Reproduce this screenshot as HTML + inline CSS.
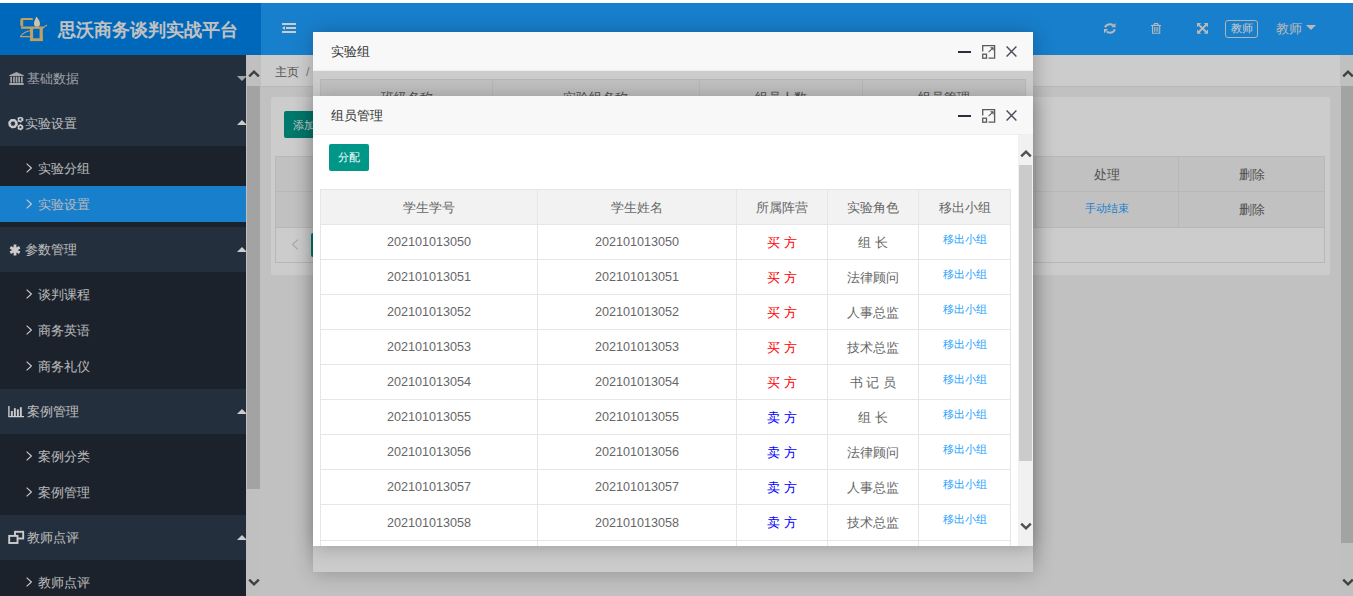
<!DOCTYPE html>
<html><head><meta charset="utf-8">
<style>
*{box-sizing:border-box;margin:0;padding:0}
html,body{width:1353px;height:596px;overflow:hidden;background:#fff;font-family:"Liberation Sans",sans-serif;font-size:12.6px;color:#666}
.a{position:absolute}
#hdr{left:0;top:3px;width:1353px;height:52px;background:#1E9FFF}
#logo{left:0;top:3px;width:261px;height:52px;background:#0083ea}
#title{left:58px;top:20px;font-size:18px;font-weight:bold;color:#f2f2f2;line-height:20px;white-space:nowrap}
#side{left:0;top:55px;width:246px;height:541px;background:#2e3b4e;overflow:hidden}
.grp{position:absolute;left:0;width:246px;height:45px;background:#2e3b4e}
.sub{position:absolute;left:0;width:246px;background:#222b38}
.gt{position:absolute;top:1px;line-height:45px;color:#ececec;white-space:nowrap}
.st{position:absolute;left:38px;line-height:36px;color:#e6e6e6;white-space:nowrap}
.arr{position:absolute;left:26px;width:6px;height:10px}
.caret{position:absolute;left:237px;width:0;height:0;border-left:5px solid transparent;border-right:5px solid transparent}
.up{border-bottom:5px solid #fff}
.dn{border-top:5px solid #fff}
.btn{position:absolute;background:#009688;color:#fff;border-radius:2px;font-size:10.8px;white-space:nowrap;overflow:hidden}
table{border-collapse:collapse;table-layout:fixed}
td{border:1px solid #e6e6e6;text-align:center;padding:0;overflow:hidden;white-space:nowrap}
td.c{padding-top:2px}
.layer{position:absolute;background:#fff;border-radius:2px;box-shadow:1px 1px 20px rgba(0,0,0,.25)}
.ltitle{position:absolute;left:0;top:0;width:720px;height:39px;background:#F8F8F8;border-bottom:1px solid #eee;color:#333;line-height:38px;padding-left:18px;padding-top:1px}
.ico{position:absolute}
.lk{color:#1E9FFF;font-size:10.8px;position:relative;top:-4px}
</style></head><body>
<div class="a" style="left:0;top:0;width:1353px;height:596px">
<div class="a" id="hdr"></div>
<div class="a" id="logo"></div>
<svg class="a" style="left:0;top:0" width="60" height="55" viewBox="0 0 60 55">
 <g fill="#f0c97e">
  <path d="M22.5 18 H32.8 V20 H23.2 V26.6 H22 Q20.3 26.6 20.3 25 V20 Q20.3 18 22.5 18 Z"/>
  <rect x="21" y="26.5" width="22.4" height="2.3"/>
  <rect x="30" y="27.5" width="3.1" height="13.5"/>
  <rect x="39.6" y="27.5" width="3.2" height="13.5"/>
  <rect x="30" y="38.3" width="12.8" height="2.8"/>
 </g>
 <path d="M42.5 28 L47 25" stroke="#f0c97e" stroke-width="1.1"/>
 <path d="M20 36.6 H30.5 M20.6 36.2 Q24 31.5 30.5 30.8" fill="none" stroke="#f0c97e" stroke-width="1.1"/>
 <path d="M36.4 16.4 Q34 21 34 23.6 Q34 26.8 37 26.8 Q40 26.8 40 23.6 Q40 21 36.4 16.4 Z" fill="#fff4d2"/>
</svg>
<div class="a" id="title">思沃商务谈判实战平台</div>
<svg class="a" style="left:282px;top:23px" width="14" height="10" viewBox="0 0 14 10">
  <rect x="0" y="0" width="14" height="2" fill="#fff"/>
  <rect x="4" y="4" width="10" height="2" fill="#fff"/>
  <rect x="0" y="8" width="14" height="2" fill="#fff"/>
  <path d="M0 5 L3 3 V7 Z" fill="#fff"/>
</svg>
<svg class="a" style="left:1100px;top:19px" width="20" height="20" viewBox="0 0 20 20">
  <path d="M5 8.2 Q6.5 5.2 10 5.2 Q12 5.2 13.2 6.4" fill="none" stroke="#e8e8e8" stroke-width="2"/>
  <path d="M15.5 4 V8.2 H11.3 Z" fill="#e8e8e8"/>
  <path d="M15 10.3 Q13.5 13.7 10 13.7 Q8 13.7 6.8 12.5" fill="none" stroke="#e8e8e8" stroke-width="2"/>
  <path d="M4 10 H8.2 L4 14.2 Z" fill="#e8e8e8"/>
</svg>
<svg class="a" style="left:1146px;top:19px" width="20" height="20" viewBox="0 0 20 20">
  <path d="M5 6.5 H15" stroke="#e8e8e8" stroke-width="1.1"/>
  <path d="M7.6 6.3 L8.6 4.6 H11.6 L12.6 6.3" fill="none" stroke="#e8e8e8" stroke-width="1.1"/>
  <path d="M6.5 6.5 V14.3 H13.7 V6.5" fill="none" stroke="#e8e8e8" stroke-width="1.1"/>
  <path d="M8.4 8 V12.8 M10.1 8 V12.8 M11.8 8 V12.8" stroke="#e8e8e8" stroke-width="0.9"/>
</svg>
<svg class="a" style="left:1192px;top:19px" width="20" height="20" viewBox="0 0 20 20">
  <path d="M5 4 H9.2 L5 8.2 Z M16 4 V8.2 L11.8 4 Z M5 14.8 V10.6 L9.2 14.8 Z M16 14.8 H11.8 L16 10.6 Z" fill="#e8e8e8"/>
  <path d="M6.5 5.5 L14.5 13.3 M14.5 5.5 L6.5 13.3" stroke="#e8e8e8" stroke-width="1.9"/>
</svg>
<div class="a" style="left:1225px;top:20px;width:33px;height:18px;border:1px solid #e0e0e0;border-radius:3px;color:#fff;font-size:11px;line-height:14px;text-align:center;padding-top:0">教师</div>
<div class="a" style="left:1276px;top:20px;font-size:12.6px;line-height:18px;color:#e8e8e8">教师</div>
<div class="a" style="left:1306px;top:25px;width:0;height:0;border-left:5px solid transparent;border-right:5px solid transparent;border-top:5px solid #e8e8e8"></div>
<div class="a" id="side">

  <div class="grp" style="top:0">
    <svg class="a" style="left:9px;top:17px" width="15" height="13" viewBox="0 0 15 13">
      <path d="M7.5 0 L14.8 3.2 V4 H0.2 V3.2 Z" fill="#fff" fill-opacity=".75"/>
      <g fill="#fff" fill-opacity=".75"><rect x="1.3" y="4.6" width="1.7" height="6"/><rect x="4.1" y="4.6" width="1.7" height="6"/>
      <rect x="6.7" y="4.6" width="1.7" height="6"/><rect x="9.3" y="4.6" width="1.7" height="6"/><rect x="12" y="4.6" width="1.7" height="6"/>
      <rect x="0.3" y="11" width="14.4" height="2"/></g>
    </svg>
    <div class="gt" style="left:27px;top:2px;color:rgba(255,255,255,.75)">基础数据</div>
    <div class="caret dn" style="top:21px;border-top-color:rgba(255,255,255,.75)"></div>
  </div>
  <div class="grp" style="top:45px;height:46px">
    <svg class="a" style="left:8px;top:17px" width="16" height="14" viewBox="0 0 16 14">
      <circle cx="5" cy="6.6" r="3.3" fill="none" stroke="#fff" stroke-width="2.8" stroke-dasharray="1.5 1.1"/>
      <circle cx="5" cy="6.6" r="3.6" fill="none" stroke="#fff" stroke-width="2"/>
      <circle cx="12.4" cy="2.5" r="2" fill="none" stroke="#fff" stroke-width="2.2" stroke-dasharray="1.1 0.9"/>
      <circle cx="12.4" cy="2.5" r="2" fill="none" stroke="#fff" stroke-width="1.2"/>
      <circle cx="12.4" cy="10.2" r="2" fill="none" stroke="#fff" stroke-width="2.2" stroke-dasharray="1.1 0.9"/>
      <circle cx="12.4" cy="10.2" r="2" fill="none" stroke="#fff" stroke-width="1.2"/>
    </svg>
    <div class="gt" style="left:25px;line-height:46px">实验设置</div>
    <div class="caret up" style="top:20px"></div>
  </div>

<div class="sub" style="top:91px;height:81px"><svg class="arr" style="top:17px" viewBox="0 0 6 10"><path d="M0.6 0.6 L5.4 5 L0.6 9.4" fill="none" stroke="#fff" stroke-width="1.1"/></svg><div class="st" style="top:5px">实验分组</div><div class="a" style="left:0;top:40px;width:246px;height:36px;background:#1E9FFF"></div><svg class="arr" style="top:53px" viewBox="0 0 6 10"><path d="M0.6 0.6 L5.4 5 L0.6 9.4" fill="none" stroke="#fff" stroke-width="1.1"/></svg><div class="st" style="top:41px">实验设置</div></div>
  <div class="grp" style="top:172px">
    <svg class="a" style="left:9px;top:17px" width="12" height="12" viewBox="0 0 12 12">
      <path d="M6 0.6 V11.4 M1.3 3.3 L10.7 8.7 M10.7 3.3 L1.3 8.7" stroke="#fff" stroke-width="2.8"/>
    </svg>
    <div class="gt" style="left:25px">参数管理</div>
    <div class="caret up" style="top:20px"></div>
  </div>

<div class="sub" style="top:217px;height:117px"><svg class="arr" style="top:17px" viewBox="0 0 6 10"><path d="M0.6 0.6 L5.4 5 L0.6 9.4" fill="none" stroke="#fff" stroke-width="1.1"/></svg><div class="st" style="top:5px">谈判课程</div><svg class="arr" style="top:53px" viewBox="0 0 6 10"><path d="M0.6 0.6 L5.4 5 L0.6 9.4" fill="none" stroke="#fff" stroke-width="1.1"/></svg><div class="st" style="top:41px">商务英语</div><svg class="arr" style="top:89px" viewBox="0 0 6 10"><path d="M0.6 0.6 L5.4 5 L0.6 9.4" fill="none" stroke="#fff" stroke-width="1.1"/></svg><div class="st" style="top:77px">商务礼仪</div></div>
  <div class="grp" style="top:334px">
    <svg class="a" style="left:8px;top:17px" width="17" height="12" viewBox="0 0 17 12">
      <path d="M0.9 0 V10.6 H16" fill="none" stroke="#fff" stroke-width="1.4"/>
      <rect x="2.9" y="5" width="1.9" height="5" fill="#fff"/><rect x="5.9" y="2.2" width="1.9" height="7.8" fill="#fff"/>
      <rect x="8.9" y="3.4" width="1.9" height="6.6" fill="#fff"/><rect x="11.9" y="1.2" width="1.9" height="8.8" fill="#fff"/>
    </svg>
    <div class="gt" style="left:27px">案例管理</div>
    <div class="caret up" style="top:20px"></div>
  </div>

<div class="sub" style="top:379px;height:81px"><svg class="arr" style="top:17px" viewBox="0 0 6 10"><path d="M0.6 0.6 L5.4 5 L0.6 9.4" fill="none" stroke="#fff" stroke-width="1.1"/></svg><div class="st" style="top:5px">案例分类</div><svg class="arr" style="top:53px" viewBox="0 0 6 10"><path d="M0.6 0.6 L5.4 5 L0.6 9.4" fill="none" stroke="#fff" stroke-width="1.1"/></svg><div class="st" style="top:41px">案例管理</div></div>
  <div class="grp" style="top:460px">
    <svg class="a" style="left:8px;top:15px" width="17" height="15" viewBox="0 0 17 15">
      <rect x="7" y="1.8" width="8.2" height="6.7" fill="none" stroke="#fff" stroke-width="1.9"/>
      <rect x="1.2" y="5.9" width="8.3" height="7.1" fill="#2e3b4e" stroke="#fff" stroke-width="1.9"/>
    </svg>
    <div class="gt" style="left:27px">教师点评</div>
    <div class="caret up" style="top:20px"></div>
  </div>

<div class="sub" style="top:505px;height:81px"><svg class="arr" style="top:17px" viewBox="0 0 6 10"><path d="M0.6 0.6 L5.4 5 L0.6 9.4" fill="none" stroke="#fff" stroke-width="1.1"/></svg><div class="st" style="top:5px">教师点评</div><svg class="arr" style="top:53px" viewBox="0 0 6 10"><path d="M0.6 0.6 L5.4 5 L0.6 9.4" fill="none" stroke="#fff" stroke-width="1.1"/></svg><div class="st" style="top:41px">教师点评</div></div>
</div>
<div class="a" style="left:246px;top:55px;width:15px;height:541px;background:#f1f1f1"></div>
<div class="a" style="left:247px;top:86px;width:13px;height:403px;background:#cccccc"></div>
<svg class="a" style="left:247.5px;top:69px" width="12" height="9" viewBox="0 0 12 9"><path d="M1.2 7.4 L6 2.6 L10.8 7.4" fill="none" stroke="#505050" stroke-width="2.4"/></svg>
<svg class="a" style="left:247.5px;top:578px" width="12" height="9" viewBox="0 0 12 9"><path d="M1.2 1.6 L6 6.4 L10.8 1.6" fill="none" stroke="#505050" stroke-width="2.4"/></svg>
<div class="a" style="left:261px;top:55px;width:1079px;height:541px;background:#f2f2f2"></div>
<div class="a" style="left:261px;top:55px;width:1079px;height:32px;background:#fff;border-bottom:1px solid #e6e6e6"></div>
<div class="a" style="left:275px;top:62px;line-height:18px;color:#666;padding-top:1px;font-size:12px">主页<span style="margin-left:7px;color:#999;font-size:12.6px">/</span></div>
<div class="a" style="left:271px;top:97px;width:1059px;height:178px;background:#fff;border-radius:2px"></div>
<div class="btn" style="left:284px;top:111px;width:70px;height:27px;line-height:27px;padding-left:9px;padding-top:1px">添加实验组</div>
<table class="a" style="left:275px;top:156px;width:1050px">
  <tr style="height:35px;background:#f2f2f2"><td style="width:760px"></td><td class="c" style="width:143px">处理</td><td class="c" style="width:146px">删除</td></tr>
  <tr style="height:36px;background:#f2f2f2"><td></td><td><span style="color:#1E9FFF;font-size:10.8px;position:relative;top:-1px">手动结束</span></td><td class="c">删除</td></tr>
</table>
<div class="a" style="left:275px;top:227px;width:1050px;height:36px;border:1px solid #e6e6e6;border-top:0"></div>
<svg class="a" style="left:291px;top:239px" width="8" height="11" viewBox="0 0 8 11"><path d="M6.8 0.6 L1.5 5.5 L6.8 10.4" fill="none" stroke="#d2d2d2" stroke-width="1.2"/></svg>
<div class="a" style="left:311px;top:233px;width:30px;height:24px;background:#009688;border-radius:2px"></div>
<div class="a" style="left:1340px;top:55px;width:13px;height:541px;background:#f1f1f1"></div>
<div class="a" style="left:1341px;top:86px;width:12px;height:457px;background:#cccccc"></div>
<svg class="a" style="left:1342px;top:69px" width="12" height="9" viewBox="0 0 12 9"><path d="M1.2 7.4 L6 2.6 L10.8 7.4" fill="none" stroke="#505050" stroke-width="2.4"/></svg>
<svg class="a" style="left:1342px;top:578px" width="12" height="9" viewBox="0 0 12 9"><path d="M1.2 1.6 L6 6.4 L10.8 1.6" fill="none" stroke="#505050" stroke-width="2.4"/></svg>
</div>
<div class="a" style="left:0;top:3px;width:1353px;height:593px;background:rgba(0,0,0,.2)"></div>

<div class="layer" style="left:313px;top:32px;width:720px;height:540px">
<div class="ltitle">实验组</div>
<div class="a" style="left:0;top:39px;width:720px;height:501px;background:#fff;overflow:hidden">
<table class="a" style="left:7px;top:8px;width:706px"><tr style="height:35.1px;background:#f2f2f2"><td class="c" style="width:172px">班级名称</td><td class="c" style="width:206.5px">实验组名称</td><td class="c" style="width:163px">组员人数</td><td class="c">组员管理</td></tr></table>
<div class="a" style="left:0;top:0;width:720px;height:501px;background:rgba(0,0,0,.2)"></div></div>
<svg class="ico" style="left:645px;top:19px" width="13" height="2"><rect width="13" height="2" fill="#2E2D3C"/></svg><svg class="ico" style="left:669px;top:13px" width="14" height="14" viewBox="0 0 14 14"><path d="M0.7 6.5 V0.7 H12.6 V13.2 H6.5" fill="none" stroke="#5a5a5a" stroke-width="1.3"/><rect x="0.7" y="9.2" width="3.8" height="4" fill="none" stroke="#5a5a5a" stroke-width="1.3"/><path d="M6.6 7.2 L11 2.8" stroke="#5a5a5a" stroke-width="1.1"/><path d="M8 2.2 H11.6 V5.8 Z" fill="#5a5a5a"/></svg><svg class="ico" style="left:693px;top:14px" width="11" height="11" viewBox="0 0 11 11"><path d="M0.6 0.6 L10.4 10.4 M10.4 0.6 L0.6 10.4" stroke="#4a4a55" stroke-width="1.4"/></svg></div>
<div class="layer" style="left:313px;top:96px;width:720px;height:450px">
<div class="ltitle">组员管理</div>
<div class="a" style="left:0;top:39px;width:720px;height:411px;background:#fff;overflow:hidden">
<div class="btn" style="left:16px;top:9px;width:40px;height:27px;line-height:26px;text-align:center;padding-top:0">分配</div>
<table class="a" style="left:7px;top:54px;width:691px">
<tr style="height:35px;background:#f2f2f2"><td class="c" style="width:217px">学生学号</td><td class="c" style="width:199px">学生姓名</td><td class="c" style="width:91px">所属阵营</td><td class="c" style="width:91px">实验角色</td><td class="c">移出小组</td></tr>
<tr style="height:35px"><td>202101013050</td><td>202101013050</td><td class="c" style="color:#f00">买 方</td><td class="c">组 长</td><td class="c"><span class="lk">移出小组</span></td></tr>
<tr style="height:35px"><td>202101013051</td><td>202101013051</td><td class="c" style="color:#f00">买 方</td><td class="c">法律顾问</td><td class="c"><span class="lk">移出小组</span></td></tr>
<tr style="height:35px"><td>202101013052</td><td>202101013052</td><td class="c" style="color:#f00">买 方</td><td class="c">人事总监</td><td class="c"><span class="lk">移出小组</span></td></tr>
<tr style="height:35px"><td>202101013053</td><td>202101013053</td><td class="c" style="color:#f00">买 方</td><td class="c">技术总监</td><td class="c"><span class="lk">移出小组</span></td></tr>
<tr style="height:35px"><td>202101013054</td><td>202101013054</td><td class="c" style="color:#f00">买 方</td><td class="c">书 记 员</td><td class="c"><span class="lk">移出小组</span></td></tr>
<tr style="height:35px"><td>202101013055</td><td>202101013055</td><td class="c" style="color:#00f">卖 方</td><td class="c">组 长</td><td class="c"><span class="lk">移出小组</span></td></tr>
<tr style="height:35px"><td>202101013056</td><td>202101013056</td><td class="c" style="color:#00f">卖 方</td><td class="c">法律顾问</td><td class="c"><span class="lk">移出小组</span></td></tr>
<tr style="height:35px"><td>202101013057</td><td>202101013057</td><td class="c" style="color:#00f">卖 方</td><td class="c">人事总监</td><td class="c"><span class="lk">移出小组</span></td></tr>
<tr style="height:36px"><td>202101013058</td><td>202101013058</td><td class="c" style="color:#00f">卖 方</td><td class="c">技术总监</td><td class="c"><span class="lk">移出小组</span></td></tr>
<tr style="height:35px"><td>202101013059</td><td>202101013059</td><td class="c" style="color:#00f">卖 方</td><td class="c">书 记 员</td><td class="c"><span class="lk">移出小组</span></td></tr>
</table>
<div class="a" style="left:705px;top:0;width:15px;height:411px;background:#f1f1f1"></div>
<div class="a" style="left:706px;top:30px;width:13px;height:296px;background:#cbcbcb"></div>
<svg class="a" style="left:706.5px;top:14px" width="12" height="9" viewBox="0 0 12 9"><path d="M1.2 7.4 L6 2.6 L10.8 7.4" fill="none" stroke="#505050" stroke-width="2.4"/></svg>
<svg class="a" style="left:706.5px;top:387px" width="12" height="9" viewBox="0 0 12 9"><path d="M1.2 1.6 L6 6.4 L10.8 1.6" fill="none" stroke="#505050" stroke-width="2.4"/></svg>
</div>
<svg class="ico" style="left:645px;top:19px" width="13" height="2"><rect width="13" height="2" fill="#2E2D3C"/></svg><svg class="ico" style="left:669px;top:13px" width="14" height="14" viewBox="0 0 14 14"><path d="M0.7 6.5 V0.7 H12.6 V13.2 H6.5" fill="none" stroke="#5a5a5a" stroke-width="1.3"/><rect x="0.7" y="9.2" width="3.8" height="4" fill="none" stroke="#5a5a5a" stroke-width="1.3"/><path d="M6.6 7.2 L11 2.8" stroke="#5a5a5a" stroke-width="1.1"/><path d="M8 2.2 H11.6 V5.8 Z" fill="#5a5a5a"/></svg><svg class="ico" style="left:693px;top:14px" width="11" height="11" viewBox="0 0 11 11"><path d="M0.6 0.6 L10.4 10.4 M10.4 0.6 L0.6 10.4" stroke="#4a4a55" stroke-width="1.4"/></svg></div>
</body></html>
